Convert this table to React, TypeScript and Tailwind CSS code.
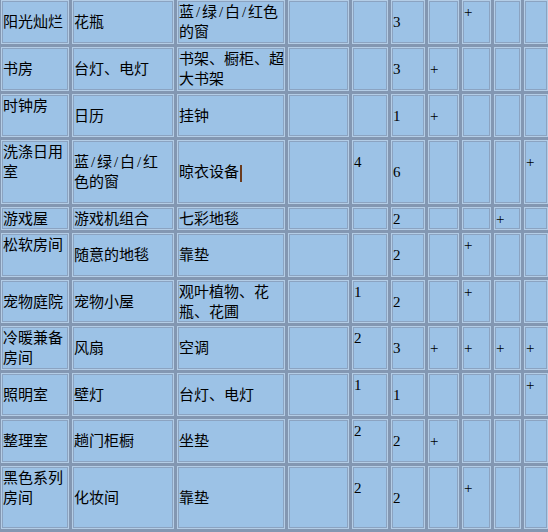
import React from "react";

type Row = { h: number; cells: (React.ReactNode | null)[]; up?: number[] };

const S = () => <span className="inline-block w-2 text-center">/</span>;

const Caret = () => (
  <span className="inline-block w-[2px] h-[17px] bg-[#6b3b1e] align-middle ml-[1px]" />
);

const rows: Row[] = [
  {
    h: 44,
    cells: ["阳光灿烂", "花瓶", <>蓝<S />绿<S />白<S />红色<br />的窗</>, null, null, "3", null, "+", null, null],
    up: [7],
  },
  {
    h: 44,
    cells: ["书房", "台灯、电灯", <>书架、橱柜、超<br />大书架</>, null, null, "3", "+", null, null, null],
  },
  {
    h: 43,
    cells: ["时钟房", "日历", "挂钟", null, null, "1", "+", null, null, null],
    up: [0],
  },
  {
    h: 64,
    cells: [<>洗涤日用<br />室</>, <>蓝<S />绿<S />白<S />红<br />色的窗</>, <>晾衣设备<Caret /></>, null, "4", "6", null, null, null, "+"],
    up: [0, 4, 9],
  },
  {
    h: 23,
    cells: ["游戏屋", "游戏机组合", "七彩地毯", null, null, "2", null, null, "+", null],
  },
  {
    h: 44,
    cells: ["松软房间", "随意的地毯", "靠垫", null, null, "2", null, "+", null, null],
    up: [0, 7],
  },
  {
    h: 43,
    cells: ["宠物庭院", "宠物小屋", <>观叶植物、花<br />瓶、花圃</>, null, "1", "2", null, "+", null, null],
    up: [4, 7],
  },
  {
    h: 44,
    cells: [<>冷暖兼备<br />房间</>, "风扇", "空调", null, "2", "3", "+", "+", "+", "+"],
    up: [4],
  },
  {
    h: 43,
    cells: ["照明室", "壁灯", "台灯、电灯", null, "1", "1", null, null, null, "+"],
    up: [4, 9],
  },
  {
    h: 44,
    cells: ["整理室", "趟门柜橱", "坐垫", null, "2", "2", "+", null, null, null],
    up: [4],
  },
  {
    h: 63,
    cells: [<>黑色系列<br />房间</>, "化妆间", "靠垫", null, "2", "2", null, "+", null, null],
    up: [0, 4, 7],
  },
];

export default function App() {
  return (
    <div className="w-[548px] h-[532px] overflow-hidden bg-[#8397b2] pl-[1px]">
      <div
        className="grid grid-cols-[68px_102px_108px_61px_36px_34px_31px_29px_27px_24px] gap-[3px] font-['Liberation_Serif','Noto_Sans_CJK_SC',serif] text-[15px] leading-[20px] text-black"
      >
        {rows.map((r, ri) =>
          r.cells.map((c, ci) => (
            <div
              key={`${ri}-${ci}`}
              style={{ height: r.h }}
              className={`flex items-center whitespace-nowrap overflow-hidden bg-[#9cc2e6] border border-[#b4cde6] shadow-[inset_0_0_0_1px_#8ba3c1] ${
                r.up?.includes(ci) ? "pb-[20px]" : ""
              }`}
            >
              <div className="pl-[1px]">{c}</div>
            </div>
          ))
        )}
      </div>
    </div>
  );
}
